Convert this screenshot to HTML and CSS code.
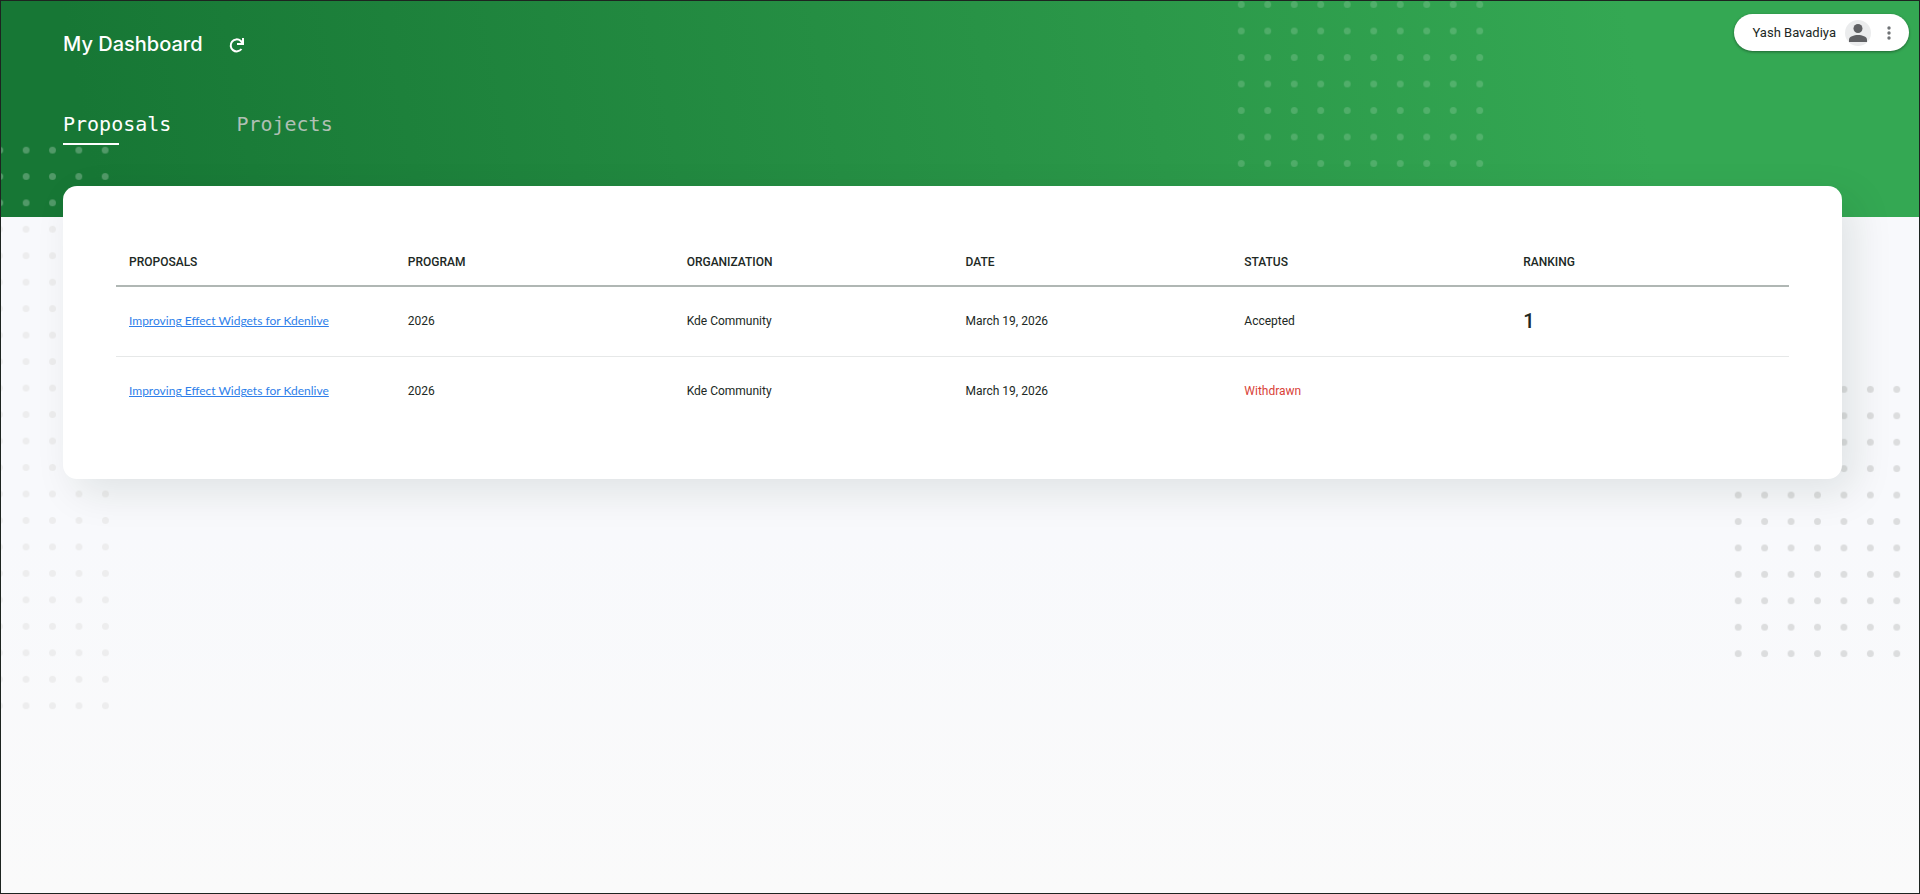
FILE: index.html
```html
<!DOCTYPE html>
<html lang="en">
<head>
  <meta charset="UTF-8" />
  <meta name="viewport" content="width=device-width, initial-scale=1.0"/>
  <title>My Dashboard</title>
  <link rel="stylesheet" href="styles.css">
</head>
<body>

<div class="page">
  <header class="hero">
    <svg class="dots dots-top" viewBox="0 0 100 70" aria-hidden="true">
      <defs>
        <pattern id="dot-light" width="10" height="10" patternUnits="userSpaceOnUse">
          <circle cx="5" cy="5" r="1.3" fill="#fff" />
        </pattern>
      </defs>
      <rect width="100" height="70" fill="url(#dot-light)" />
    </svg>
    <svg class="dots dots-corner" viewBox="0 0 50 30" aria-hidden="true">
      <rect width="50" height="30" fill="url(#dot-light)" />
    </svg>

    <div class="title-row">
      <h1>My Dashboard</h1>
      <button class="icon-btn" type="button" aria-label="Refresh">
        <svg width="18" height="18" viewBox="0 0 18 18" fill="none" stroke="currentColor" stroke-width="2">
          <path d="M14.500 14A6 6 0 1 1 13.600 5.800L15.500 8" />
          <path d="M16 3v6H10" />
        </svg>
      </button>
    </div>

    <nav class="tabs">
      <a class="tab active" href="#proposals">Proposals</a>
      <a class="tab" href="#projects">Projects</a>
    </nav>
  </header>

  <svg class="dots dots-left" viewBox="0 0 50 190" aria-hidden="true">
    <defs>
      <pattern id="dot-left" width="10" height="10" patternUnits="userSpaceOnUse">
        <circle cx="5" cy="5" r="1.3" fill="#ededee" />
      </pattern>
    </defs>
    <rect width="50" height="190" fill="url(#dot-left)" />
  </svg>
  <svg class="dots dots-right" viewBox="0 0 70 110" aria-hidden="true">
    <defs>
      <pattern id="dot-right" width="10" height="10" patternUnits="userSpaceOnUse">
        <circle cx="5" cy="5" r="1.3" fill="#dcddde" />
      </pattern>
    </defs>
    <rect width="70" height="110" fill="url(#dot-right)" />
  </svg>

  <main class="card" id="proposals">
    <table>
      <thead>
        <tr>
          <th scope="col">PROPOSALS</th>
          <th scope="col">PROGRAM</th>
          <th scope="col">ORGANIZATION</th>
          <th scope="col">DATE</th>
          <th scope="col">STATUS</th>
          <th scope="col">RANKING</th>
        </tr>
      </thead>
      <tbody>
        <tr>
          <td><a href="#proposal-1">Improving Effect Widgets for Kdenlive</a></td>
          <td>2026</td>
          <td>Kde Community</td>
          <td>March 19, 2026</td>
          <td>Accepted</td>
          <td class="rank">1</td>
        </tr>
        <tr>
          <td><a href="#proposal-2">Improving Effect Widgets for Kdenlive</a></td>
          <td>2026</td>
          <td>Kde Community</td>
          <td>March 19, 2026</td>
          <td class="withdrawn">Withdrawn</td>
          <td></td>
        </tr>
      </tbody>
    </table>
  </main>

  <div class="user-pill">
    <span class="user-name">Yash Bavadiya</span>
    <svg class="avatar" width="26" height="26" viewBox="0 0 26 26" aria-hidden="true">
      <circle cx="13" cy="13" r="13" fill="#ebeced" />
      <circle cx="13" cy="8.500" r="4.500" fill="#5f6063" />
      <path d="M4 22v-2.500c0-3 5-4.500 9-4.500s9 1.500 9 4.500V22z" fill="#5f6063" />
    </svg>
    <button class="menu-btn" type="button" aria-label="Open menu">
      <svg width="4" height="14" viewBox="0 0 4 14" fill="currentColor">
        <circle cx="2" cy="2" r="1.700" />
        <circle cx="2" cy="7" r="1.700" />
        <circle cx="2" cy="12" r="1.700" />
      </svg>
    </button>
  </div>
</div>

</body>
</html>
```

FILE: styles.css
```css
:root {
  --green-dark: #177735;
  --green: #34a853;
  --link: #2f7fea;
  --text: #202824;
  --danger: #d93f38;
}

* {
  margin: 0;
  padding: 0;
  box-sizing: border-box;
}

body {
  font-family: Roboto, sans-serif;
  font-size: 12px;
  color: var(--text);
}

button {
  background: none;
  border: none;
  cursor: pointer;
}

.page {
  position: relative;
  min-height: 100vh;
  overflow: hidden;
  border: 1px solid #1d2420;
  background: linear-gradient(#f8f9fc 60%, #fafafa);
}

.hero {
  position: relative;
  overflow: hidden;
  padding: 28px 62px 72px;
  background: linear-gradient(80deg, var(--green-dark) 5%, #2b9849 60%, var(--green) 85%);
  color: #fff;
}

.title-row {
  display: flex;
  align-items: center;
  gap: 24px;
  height: 30px;
}

h1 {
  font-family: Inter, sans-serif;
  font-size: 20px;
  font-weight: 500;
  line-height: 30px;
}

.icon-btn {
  display: flex;
  color: #fff;
}

.tabs {
  position: relative;
  display: flex;
  gap: 65px;
  margin-top: 51px;
}

.tab {
  position: relative;
  height: 35px;
  font-family: "DejaVu Sans Mono", monospace;
  font-size: 20px;
  line-height: 28px;
  color: #b0c0b5;
  text-decoration: none;
}

.tab.active {
  color: #fff;
}

.tab.active::after {
  content: "";
  position: absolute;
  left: 0;
  bottom: 0;
  width: 56px;
  height: 2px;
  background: #fff;
}

/* dotted decorations */
.dots {
  position: absolute;
  pointer-events: none;
}

.dots-top {
  top: -10px;
  right: 426px;
  width: 265px;
  height: 186px;
  opacity: 0.16;
}

.dots-corner {
  top: 136px;
  left: -15px;
  width: 133px;
  height: 79px;
  opacity: 0.25;
}

.dots-left {
  top: 215px;
  left: -15px;
  width: 133px;
  height: 503px;
}

.dots-right {
  top: 375px;
  right: 9px;
  width: 185px;
  height: 291px;
}

.card {
  position: relative;
  margin: -31px 77px 0 62px;
  padding: 53px;
  background: #fff;
  border-radius: 14px;
  box-shadow: 12px 13px 40px rgba(10, 40, 20, 0.1);
}

table {
  width: 100%;
  table-layout: fixed;
  border-collapse: collapse;
}

th,
td {
  padding: 0 13px;
  text-align: left;
}

th {
  height: 47px;
  font-weight: 500;
  padding-bottom: 1px;
  border-bottom: 2px solid #b0b7b4;
}

td {
  height: 70px;
  padding-bottom: 1px;
}

tbody tr + tr td {
  border-top: 1px solid #e6e8e8;
}

td a {
  font-family: Lato, sans-serif;
  color: var(--link);
  white-space: nowrap;
}

.rank {
  font-size: 20px;
  font-weight: 500;
}

.withdrawn {
  color: var(--danger);
}

.user-pill {
  position: absolute;
  top: 13px;
  right: 10px;
  display: flex;
  align-items: center;
  height: 37px;
  padding: 0 18px 0 19px;
  background: #fff;
  border-radius: 19px;
  box-shadow: 0 1px 3px rgba(0, 0, 0, 0.4);
}

.user-name {
  font-size: 13px;
}

.avatar {
  margin: 0 16px 0 9px;
}

.menu-btn {
  display: flex;
  color: #6f7275;
}
```
